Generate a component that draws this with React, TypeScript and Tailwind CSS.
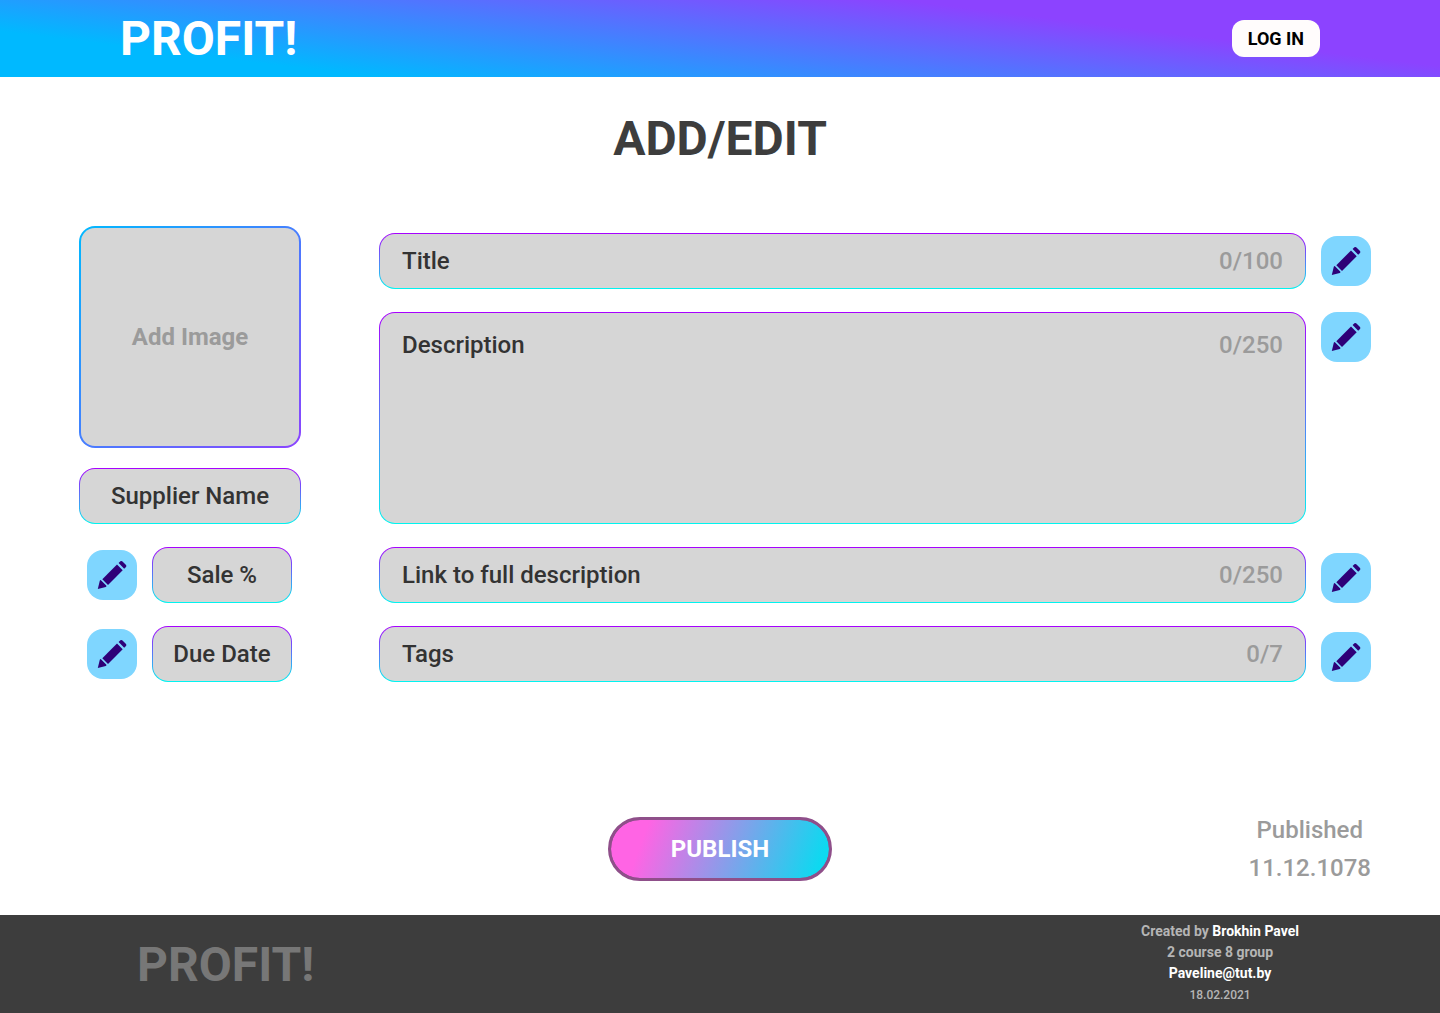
import React from "react";

function PencilButton({ label }: { label: string }) {
  return (
    <button
      type="button"
      aria-label={label}
      className="size-[50px] shrink-0 cursor-pointer rounded-2xl bg-[#7fd6ff]"
    >
      <svg viewBox="0 0 50 50" className="size-[50px]" fill="#2e0078" aria-hidden="true">
        <path d="M10.8 39.1 L12.8 30.8 Q13.3 29.6 14.2 30.5 L19.2 35.5 Q20 36.5 18.8 36.9 Z" />
        <path d="M15.3 29.2 L30 14.5 L35.7 20.2 L21 34.9 Z" />
        <path d="M31.6 13.1 L33.4 11.3 Q34.3 10.5 35.2 11.3 L39 15.1 Q39.8 16 39 16.9 L37.2 18.7 Z" />
      </svg>
    </button>
  );
}

const box =
  "rounded-2xl border border-transparent [background:linear-gradient(#d6d6d6,#d6d6d6)_padding-box,linear-gradient(#a800ff,#00f5f0)_border-box]";

type FieldProps = { id: string; label: string; limit: string; align?: string };

function Field({ id, label, limit, align = "items-center" }: FieldProps) {
  return (
    <div className={`flex gap-[15px] ${align}`}>
      <div className={`${box} flex h-14 min-w-0 flex-1 items-center gap-4 px-[22px]`}>
        <label htmlFor={id} className="shrink-0">
          {label}
        </label>
        <input id={id} type="text" className="min-w-0 flex-1 bg-transparent outline-none" />
        <span className="text-[#9b9b9b]">{limit}</span>
      </div>
      <PencilButton label={`Edit ${label}`} />
    </div>
  );
}

function SmallField({ label }: { label: string }) {
  return (
    <div className="flex items-center gap-[15px] pl-2">
      <PencilButton label={`Edit ${label}`} />
      <input
        type="text"
        aria-label={label}
        placeholder={label}
        className={`${box} h-14 w-[140px] text-center outline-none placeholder:text-[#333333] placeholder:opacity-100`}
      />
    </div>
  );
}

export default function App() {
  return (
    <div className="flex min-h-screen flex-col bg-white font-['Roboto',sans-serif]">
      <header className="flex items-center justify-between bg-[linear-gradient(7deg,#00b9ff_18%,#8c43ff_74%)] px-[120px] py-[10px]">
        <a href="#" className="text-5xl leading-[57px] font-bold text-white">
          PROFIT!
        </a>
        <button
          type="button"
          className="h-[37px] cursor-pointer rounded-xl bg-[#fffcfc] px-4 text-lg font-bold text-black"
        >
          LOG IN
        </button>
      </header>

      <main className="flex flex-1 flex-col pr-[69px] pl-[79px] text-2xl font-medium text-[#333333]">
        <h1 className="mt-8 -ml-[10px] text-center text-5xl leading-[60px] font-bold text-[#3d3d3d]">
          ADD/EDIT
        </h1>

        <form id="offer" className="mt-[57px] flex gap-[78px]">
          <div className="flex w-[222px] shrink-0 flex-col">
            <button
              type="button"
              className="h-[222px] cursor-pointer rounded-2xl border-2 border-transparent font-bold text-[#9b9b9b] [background:linear-gradient(#d6d6d6,#d6d6d6)_padding-box,linear-gradient(135deg,#00b9ff,#8c43ff)_border-box]"
            >
              Add Image
            </button>
            <input
              type="text"
              aria-label="Supplier Name"
              placeholder="Supplier Name"
              className={`${box} mt-5 mb-[23px] h-14 text-center outline-none placeholder:text-[#333333] placeholder:opacity-100`}
            />
            <div className="flex flex-col gap-[23px]">
              <SmallField label="Sale %" />
              <SmallField label="Due Date" />
            </div>
          </div>

          <div className="flex min-w-0 flex-1 flex-col gap-[23px] pt-[7px]">
            <Field id="title" label="Title" limit="0/100" />
            <div className="flex items-start gap-[15px]">
              <div className={`${box} flex h-[212px] min-w-0 flex-1 items-start gap-4 px-[22px] py-4`}>
                <label htmlFor="description" className="shrink-0">
                  Description
                </label>
                <textarea
                  id="description"
                  className="h-full min-w-0 flex-1 resize-none bg-transparent outline-none"
                />
                <span className="text-[#9b9b9b]">0/250</span>
              </div>
              <PencilButton label="Edit Description" />
            </div>
            <Field id="link" label="Link to full description" limit="0/250" align="items-end" />
            <Field id="tags" label="Tags" limit="0/7" align="items-end" />
          </div>
        </form>

        <div className="mt-auto mb-7 grid grid-cols-[1fr_auto_1fr] items-end">
          <button
            type="submit"
            form="offer"
            className="col-start-2 mb-[6px] -ml-[10px] h-16 w-56 cursor-pointer rounded-full border-3 border-[#8f4f8a] font-bold text-white [background:linear-gradient(110deg,#ff64e4_16%,#0dd9f0_94%)_padding-box,#8f4f8a_border-box]"
          >
            PUBLISH
          </button>
          <p className="justify-self-end text-center leading-[38px] text-[#9b9b9b]">
            Published
            <br />
            11.12.1078
          </p>
        </div>
      </main>

      <footer className="flex h-[98px] items-center justify-between bg-[#3d3d3d] pr-[141px] pl-[137px]">
        <a href="#" className="pt-[2px] text-5xl font-bold text-[#777777]">
          PROFIT!
        </a>
        <div className="pb-[2px] text-center text-sm leading-[21px] font-bold text-[#b5b5b5]">
          <p>
            Created by <span className="text-white">Brokhin Pavel</span>
          </p>
          <p>2 course 8 group</p>
          <p>
            <a href="mailto:Paveline@tut.by" className="text-white">
              Paveline@tut.by
            </a>
          </p>
          <p className="text-xs leading-[22px] font-medium">18.02.2021</p>
        </div>
      </footer>
    </div>
  );
}
